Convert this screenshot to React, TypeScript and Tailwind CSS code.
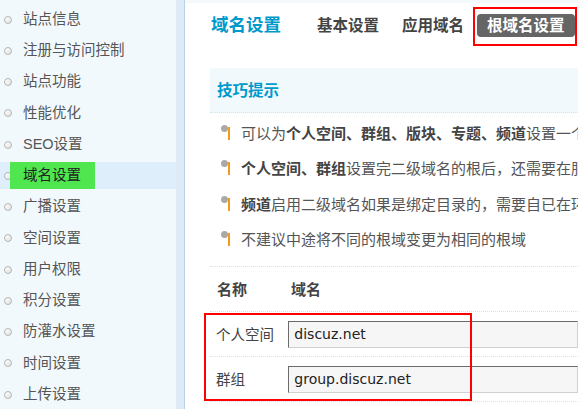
import React from "react";

const cjk = "font-['Liberation_Sans','Noto_Sans_CJK_SC',sans-serif]";

const menu = [
  "站点信息",
  "注册与访问控制",
  "站点功能",
  "性能优化",
  "SEO设置",
  "域名设置",
  "广播设置",
  "空间设置",
  "用户权限",
  "积分设置",
  "防灌水设置",
  "时间设置",
  "上传设置",
];

const Dot = () => (
  <span className="inline-block w-[8px] h-[8px] rounded-full border border-[#b4b4b4] bg-gradient-to-br from-white to-[#e2e2e2] shrink-0" />
);

const TipBullet = () => (
  <span className="relative block w-[18px] h-[16px] shrink-0">
    <span className="absolute left-0 top-[-1px] w-[7px] h-[7px] rounded-full bg-[#a9a9a9]" />
    <span className="absolute left-[7px] top-[1px] w-[2px] h-[13px] bg-[#f39a1e]" />
  </span>
);

const Sidebar = () => (
  <div className="w-[176px] shrink-0 bg-[#f2f9fd] pt-[4px]">
    {menu.map((m) => {
      const active = m === "域名设置";
      return (
        <div key={m} className="h-[31.25px] flex items-center">
          {active ? (
            <div className="w-full h-[27px] bg-[#deeffb] flex items-center relative">
              <span className="ml-[4px] flex">
                <Dot />
              </span>
              <span className="absolute left-[10px] top-[0px] w-[85px] h-[27px] bg-[#50e650]" />
              <span className="relative ml-[11px] text-[14.5px] text-[#222]">{m}</span>
            </div>
          ) : (
            <div className="flex items-center pl-[4px]">
              <Dot />
              <span className="ml-[11px] text-[14.5px] text-[#555]">{m}</span>
            </div>
          )}
        </div>
      );
    })}
  </div>
);

const tips: { b?: string; pre?: string; t: string }[] = [
  { pre: "可以为", b: "个人空间、群组、版块、专题、频道", t: "设置一个根域名，比如：discuz.net" },
  { b: "个人空间、群组", t: "设置完二级域名的根后，还需要在服务器上设置泛解析" },
  { b: "频道", t: "启用二级域名如果是绑定目录的，需要自已在环境中绑定" },
  { t: "不建议中途将不同的根域变更为相同的根域" },
];

const Field = ({ label, value }: { label: string; value: string }) => (
  <div className="h-[45px] flex items-center border-b border-dotted border-[#cfe3f3]">
    <div className="w-[81px] pl-[6px] pt-[4px] text-[14.5px] text-[#444]">{label}</div>
    <div className="w-[300px] h-[27px] flex items-center pl-[5px] bg-[#f6f6f6] border-t border-l border-[#6b6b6b] border-r border-b border-r-[#d0d0d0] border-b-[#d0d0d0] font-['DejaVu_Sans',sans-serif] text-[14px] text-[#222]">
      {value}
    </div>
  </div>
);

export default function App() {
  return (
    <div className={`w-[578px] h-[409px] overflow-hidden flex bg-white ${cjk}`}>
      <Sidebar />
      <div className="w-[9px] shrink-0 bg-[#deebf7] border-r border-[#b9d1e8]" />
      <div className="flex-1 min-w-0 relative">
        <div className="h-[3px] bg-[#f4f9fc]" />
        <div className="h-[45px] flex items-center pl-[26px] whitespace-nowrap">
          <span className="text-[17.5px] font-bold text-[#0099cc]">域名设置</span>
          <span className="ml-[36px] text-[15.5px] font-bold text-[#444]">基本设置</span>
          <span className="ml-[23px] text-[15.5px] font-bold text-[#444]">应用域名</span>
          <span className="relative ml-[13px]">
            <span className="block h-[23px] leading-[23px] px-[10px] rounded-[4px] bg-[#656565] text-white text-[15.5px] font-bold">
              根域名设置
            </span>
            <span className="absolute left-[-4px] top-[-7px] w-[104px] h-[39px] border-2 border-[#f00]" />
          </span>
        </div>
        <div className="ml-[25px] mt-[20px]">
          <div className="h-[45px] flex items-center pl-[7px] pt-[2px] bg-[#f2f9fd] border-b border-dotted border-[#cfe3f3]">
            <span className="text-[15.5px] font-bold text-[#0099cc]">技巧提示</span>
          </div>
          <ul className="pt-[3px] pb-[8px] border-b border-dotted border-[#cfe3f3] whitespace-nowrap">
            {tips.map((tip, i) => (
              <li key={i} className="h-[35.5px] flex items-center pl-[11px] text-[15px] text-[#555]">
                <TipBullet />
                <span className="ml-[2px]">
                  {tip.pre}
                  {tip.b && <b className="text-[#444]">{tip.b}</b>}
                  {tip.t}
                </span>
              </li>
            ))}
          </ul>
          <div className="h-[45px] flex items-center pt-[3px] border-b border-dotted border-[#cfe3f3] font-bold text-[15px] text-[#444]">
            <div className="w-[81px] pl-[7px]">名称</div>
            <div>域名</div>
          </div>
          <div className="relative">
            <Field label="个人空间" value="discuz.net" />
            <Field label="群组" value="group.discuz.net" />
            <span className="absolute left-[-6px] top-[1px] w-[268px] h-[88px] border-2 border-[#f00]" />
          </div>
        </div>
      </div>
    </div>
  );
}
